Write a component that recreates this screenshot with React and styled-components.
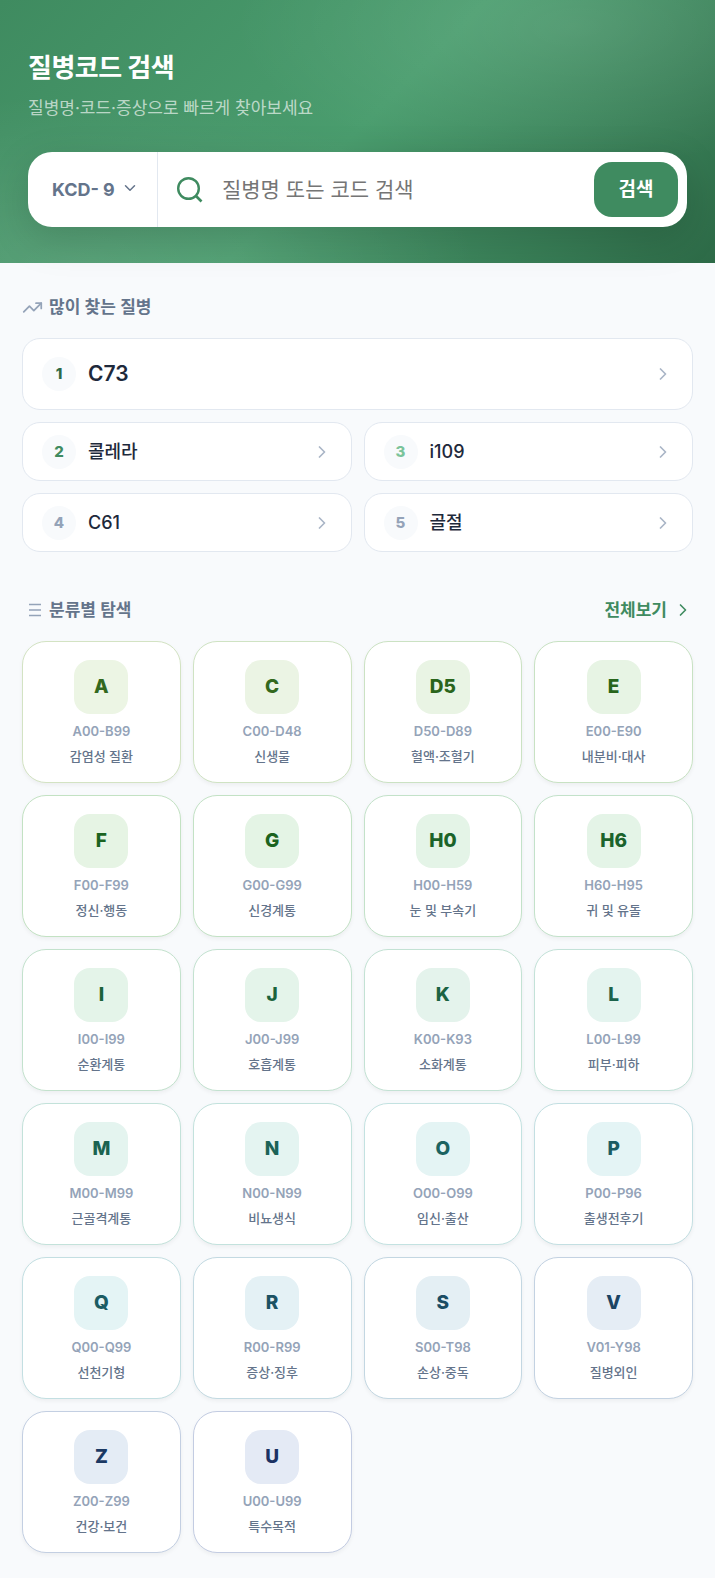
import React, { useState } from "react";
import styled, { createGlobalStyle } from "styled-components";
import { ChevronDown, ChevronRight, TrendingUp } from "lucide-react";

const GlobalStyle = createGlobalStyle`
  * {
    box-sizing: border-box;
  }
  body {
    margin: 0;
    background: #f8fafc;
    color: #1e293b;
    font-family: Inter, "Noto Sans CJK KR", sans-serif;
  }
  button,
  input,
  select {
    font-family: inherit;
  }
`;

const Hero = styled.header`
  padding: 50px 28px 36px;
  background:
    radial-gradient(ellipse at 10% 100%, rgba(255, 255, 255, 0.1) 0%, transparent 45%),
    radial-gradient(ellipse at 80% 10%, rgba(255, 255, 255, 0.1) 0%, transparent 42%),
    linear-gradient(135deg, #3f8b60 0%, #4a9d6e 50%, #2d6a47 100%);
`;
const HeroTitle = styled.h1`
  margin: 0;
  font-size: 26px;
  line-height: 36px;
  font-weight: 700;
  letter-spacing: -0.5px;
  color: white;
`;
const HeroText = styled.p`
  margin: 8px 0 30px;
  font-size: 17px;
  line-height: 28px;
  color: rgba(255, 255, 255, 0.65);
`;
const SearchForm = styled.form`
  display: flex;
  align-items: center;
  height: 75px;
  padding-right: 9px;
  border-radius: 24px;
  background: white;
  box-shadow: 0 12px 40px rgba(0, 0, 0, 0.15);
`;
const Version = styled.label`
  display: flex;
  align-items: center;
  align-self: stretch;
  gap: 2px;
  padding: 0 18px 0 24px;
  border-right: 1px solid #e2e8f0;
  font-size: 18px;
  font-weight: 700;
  color: #64748b;
`;
const VersionSelect = styled.select`
  appearance: none;
  width: 38px;
  padding: 0 0 0 2px;
  border: none;
  outline: none;
  background: none;
  font-size: 18px;
  font-weight: 700;
  color: #64748b;
`;
const VersionArrow = styled(ChevronDown)`
  margin: 0 0 4px -20px;
  pointer-events: none;
`;
const SearchIcon = styled.svg`
  flex: none;
  margin: 0 18px;
`;
const SearchInput = styled.input`
  flex: 1;
  min-width: 0;
  padding: 0;
  border: none;
  outline: none;
  background: none;
  font-size: 21px;
  line-height: 32px;
  color: #1e293b;
  &::placeholder {
    color: #757575;
  }
`;
const SearchButton = styled.button`
  width: 84px;
  height: 55px;
  padding: 0;
  border: none;
  border-radius: 18px;
  background: #3f8b60;
  color: white;
  font-size: 19px;
  line-height: 28px;
  font-weight: 700;
  cursor: pointer;
`;

const Section = styled.section`
  padding: 30px 22px 0;
`;
const Categories = styled(Section)`
  padding: 44px 22px 24px;
`;
const SectionHeader = styled.div`
  display: flex;
  align-items: center;
  justify-content: space-between;
  height: 28px;
  margin-bottom: 17px;
`;
const SectionTitle = styled.h2`
  display: flex;
  align-items: center;
  gap: 6px;
  margin: 0;
  font-size: 17px;
  line-height: 28px;
  font-weight: 600;
  color: #64748b;
  svg {
    color: #94a3b8;
  }
`;
const MoreLink = styled.a`
  display: flex;
  align-items: center;
  gap: 6px;
  font-size: 17px;
  line-height: 28px;
  font-weight: 600;
  color: #3f8b60;
  text-decoration: none;
`;

const PopularList = styled.div`
  display: grid;
  grid-template-columns: 1fr 1fr;
  gap: 12px;
`;
const PopularItem = styled.a`
  display: flex;
  align-items: center;
  gap: 12px;
  grid-column: ${(props) => (props.$top ? "1 / -1" : "auto")};
  height: ${(props) => (props.$top ? "72px" : "59px")};
  padding: 0 19px;
  border: 1px solid #e2e8f0;
  border-radius: 18px;
  background: white;
  color: #1e293b;
  font-size: ${(props) => (props.$top ? "21px" : "18px")};
  line-height: 28px;
  font-weight: ${(props) => (props.$top ? 600 : 500)};
  text-decoration: none;
  svg {
    margin-left: auto;
    color: #94a3b8;
    opacity: 0.8;
  }
`;
const Rank = styled.span`
  display: flex;
  align-items: center;
  justify-content: center;
  width: 34px;
  height: 34px;
  border-radius: 50%;
  background: #f8fafc;
  font-size: 15px;
  font-weight: 800;
  color: ${(props) => props.$color};
`;

const CategoryGrid = styled.div`
  display: grid;
  grid-template-columns: repeat(4, 1fr);
  gap: 12px;
`;
const CategoryCard = styled.a`
  display: flex;
  flex-direction: column;
  align-items: center;
  height: 142px;
  padding-top: 18px;
  border: 1px solid ${(props) => props.$border};
  border-radius: 24px;
  background: white;
  box-shadow: 0 2px 4px rgba(0, 0, 0, 0.05);
  text-decoration: none;
`;
const CategoryMark = styled.span`
  display: flex;
  align-items: center;
  justify-content: center;
  width: 54px;
  height: 54px;
  border-radius: 16px;
  background: ${(props) => props.$bg};
  color: ${(props) => props.$color};
  font-size: 19px;
  line-height: 24px;
  font-weight: 800;
`;
const CategoryCode = styled.span`
  margin-top: 7px;
  font-size: 13px;
  line-height: 20px;
  font-weight: 600;
  color: #94a3b8;
`;
const CategoryName = styled.span`
  margin-top: 5px;
  font-size: 13px;
  line-height: 20px;
  font-weight: 500;
  color: #64748b;
`;

const popular = [
  { name: "C73", color: "#2d6a47" },
  { name: "콜레라", color: "#3f8b60" },
  { name: "i109", color: "#7bc49a" },
  { name: "C61", color: "#94a3b8" },
  { name: "골절", color: "#94a3b8" },
];

// mark, code range, name, text colour, tile colour, border colour
const categories = [
  ["A", "A00-B99", "감염성 질환", "#33691e", "#ecf5e4", "#d3e3c3"],
  ["C", "C00-D48", "신생물", "#33691e", "#ebf4e4", "#cfe3c3"],
  ["D5", "D50-D89", "혈액·조혈기", "#2a651b", "#e9f4e4", "#cbe2c3"],
  ["E", "E00-E90", "내분비·대사", "#27651b", "#e7f4e4", "#c8e2c3"],
  ["F", "F00-F99", "정신·행동", "#1b6320", "#e6f4e4", "#c3e2c3"],
  ["G", "G00-G99", "신경계통", "#1b6320", "#e4f4e5", "#c3e2c5"],
  ["H0", "H00-H59", "눈 및 부속기", "#1b6329", "#e4f4e7", "#c3e2c9"],
  ["H6", "H60-H95", "귀 및 유돌", "#1b632c", "#e4f4e7", "#c3e2ca"],
  ["I", "I00-I99", "순환계통", "#1b6339", "#e4f4e9", "#c3e2cd"],
  ["J", "J00-J99", "호흡계통", "#1b633c", "#e4f4ea", "#c3e2d0"],
  ["K", "K00-K93", "소화계통", "#1b6343", "#e4f3ec", "#c3e2d4"],
  ["L", "L00-L99", "피부·피하", "#1b634b", "#e4f4ef", "#c3e2d8"],
  ["M", "M00-M99", "근골격계통", "#1b6350", "#e4f4ef", "#c3e2da"],
  ["N", "N00-N99", "비뇨생식", "#1b6357", "#e4f4f1", "#c3e2dd"],
  ["O", "O00-O99", "임신·출산", "#1b6360", "#e4f4f4", "#c3e2e1"],
  ["P", "P00-P96", "출생전후기", "#1b5c63", "#e4f4f5", "#c3dfe2"],
  ["Q", "Q00-Q99", "선천기형", "#1b5c63", "#e4f4f5", "#c3dfe2"],
  ["R", "R00-R99", "증상·징후", "#1b5263", "#e4f1f5", "#c3dae2"],
  ["S", "S00-T98", "손상·중독", "#1b4d63", "#e4eff4", "#c3d7e2"],
  ["V", "V01-Y98", "질병외인", "#1b4463", "#e5edf5", "#c3d2e2"],
  ["Z", "Z00-Z99", "건강·보건", "#1b3963", "#e4ecf5", "#c3cfe2"],
  ["U", "U00-U99", "특수목적", "#1b3263", "#e4eaf5", "#c3cce2"],
];

const App = () => {
  const [keyword, setKeyword] = useState("");
  const [version, setVersion] = useState("9");
  return (
    <>
      <GlobalStyle />
      <Hero>
        <HeroTitle>질병코드 검색</HeroTitle>
        <HeroText>질병명·코드·증상으로 빠르게 찾아보세요</HeroText>
        <SearchForm onSubmit={(e) => e.preventDefault()}>
          <Version>
            KCD-
            <VersionSelect
              value={version}
              onChange={(e) => setVersion(e.target.value)}
            >
              <option>9</option>
              <option>8</option>
              <option>7</option>
            </VersionSelect>
            <VersionArrow size={18} />
          </Version>
          <SearchIcon width="28" height="28" viewBox="0 0 28 28" fill="none">
            <circle cx="12.5" cy="12.5" r="10.3" stroke="#3f8b60" strokeWidth="2.4" />
            <path d="M19.5 19.5l6 6" stroke="#3f8b60" strokeWidth="2.6" />
          </SearchIcon>
          <SearchInput
            aria-label="질병명 또는 코드 검색"
            placeholder="질병명 또는 코드 검색"
            value={keyword}
            onChange={(e) => setKeyword(e.target.value)}
          />
          <SearchButton type="submit">검색</SearchButton>
        </SearchForm>
      </Hero>

      <Section>
        <SectionHeader>
          <SectionTitle>
            <TrendingUp size={21} />
            많이 찾는 질병
          </SectionTitle>
        </SectionHeader>
        <PopularList>
          {popular.map((item, i) => (
            <PopularItem key={item.name} href="#" $top={i === 0}>
              <Rank $color={item.color}>{i + 1}</Rank>
              {item.name}
              <ChevronRight size={20} />
            </PopularItem>
          ))}
        </PopularList>
      </Section>

      <Categories>
        <SectionHeader>
          <SectionTitle>
            <svg width="21" height="21" viewBox="0 0 21 21" fill="none">
              <path d="M7 4.5h12M7 10h12M7 15.5h12" stroke="currentColor" strokeWidth="1.6" />
            </svg>
            분류별 탐색
          </SectionTitle>
          <MoreLink href="#">
            전체보기
            <ChevronRight size={20} />
          </MoreLink>
        </SectionHeader>
        <CategoryGrid>
          {categories.map(([mark, code, name, color, bg, border]) => (
            <CategoryCard key={code} href="#" $border={border}>
              <CategoryMark $bg={bg} $color={color}>
                {mark}
              </CategoryMark>
              <CategoryCode>{code}</CategoryCode>
              <CategoryName>{name}</CategoryName>
            </CategoryCard>
          ))}
        </CategoryGrid>
      </Categories>
    </>
  );
};

export default App;
